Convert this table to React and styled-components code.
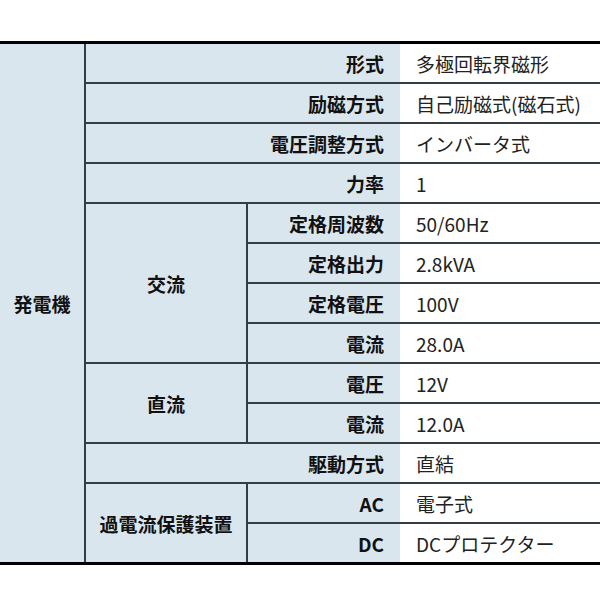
import React from 'react';
import styled, { createGlobalStyle } from 'styled-components';

const labelBg = '#dae6ee';
const lineColor = '#333d42';

const GlobalStyle = createGlobalStyle`
  body {
    margin: 0;
    background: #fff;
    font-family: "Noto Sans CJK JP", "Noto Sans", sans-serif;
    color: #111;
  }
`;

const Table = styled.table`
  margin-top: 41px;
  width: 600px;
  border-collapse: collapse;
  table-layout: fixed;
  border-top: 3px solid #000;
  border-bottom: 3px solid #000;
`;

const Col = styled.col`
  width: ${(p) => p.$w}px;
`;

const Cell = styled.td`
  height: 38px;
  padding: 0 16px;
  font-size: 19px;
  line-height: 1;
  border-bottom: 2px solid ${lineColor};
  white-space: nowrap;
`;

const GroupCell = styled(Cell)`
  background: ${labelBg};
  font-weight: bold;
  text-align: center;
  padding: 0;
  border-right: 2px solid ${lineColor};
`;

const LabelCell = styled(Cell)`
  background: ${labelBg};
  font-weight: bold;
  text-align: right;
`;

const ValueCell = styled(Cell)`
  background: #fff;
  text-align: left;
  color: #222;
`;

const columns = [85, 162, 153, 200];

// rows of the spec table; group cells span several rows
const rows = [
  { top: true, label: '形式', value: '多極回転界磁形', span: 2 },
  { label: '励磁方式', value: '自己励磁式(磁石式)', span: 2 },
  { label: '電圧調整方式', value: 'インバータ式', span: 2 },
  { label: '力率', value: '1', span: 2 },
  { group: '交流', groupRows: 4, label: '定格周波数', value: '50/60Hz' },
  { label: '定格出力', value: '2.8kVA' },
  { label: '定格電圧', value: '100V' },
  { label: '電流', value: '28.0A' },
  { group: '直流', groupRows: 2, label: '電圧', value: '12V' },
  { label: '電流', value: '12.0A' },
  { label: '駆動方式', value: '直結', span: 2 },
  { group: '過電流保護装置', groupRows: 2, label: 'AC', value: '電子式' },
  { label: 'DC', value: 'DCプロテクター' },
];

export default function App() {
  return (
    <>
      <GlobalStyle />
      <Table>
        <colgroup>
          {columns.map((w, i) => (
            <Col key={i} $w={w} />
          ))}
        </colgroup>
        <tbody>
          {rows.map((row, i) => (
            <tr key={i}>
              {row.top && <GroupCell rowSpan={rows.length}>発電機</GroupCell>}
              {row.group && <GroupCell rowSpan={row.groupRows}>{row.group}</GroupCell>}
              <LabelCell colSpan={row.span || 1}>{row.label}</LabelCell>
              <ValueCell>{row.value}</ValueCell>
            </tr>
          ))}
        </tbody>
      </Table>
    </>
  );
}
